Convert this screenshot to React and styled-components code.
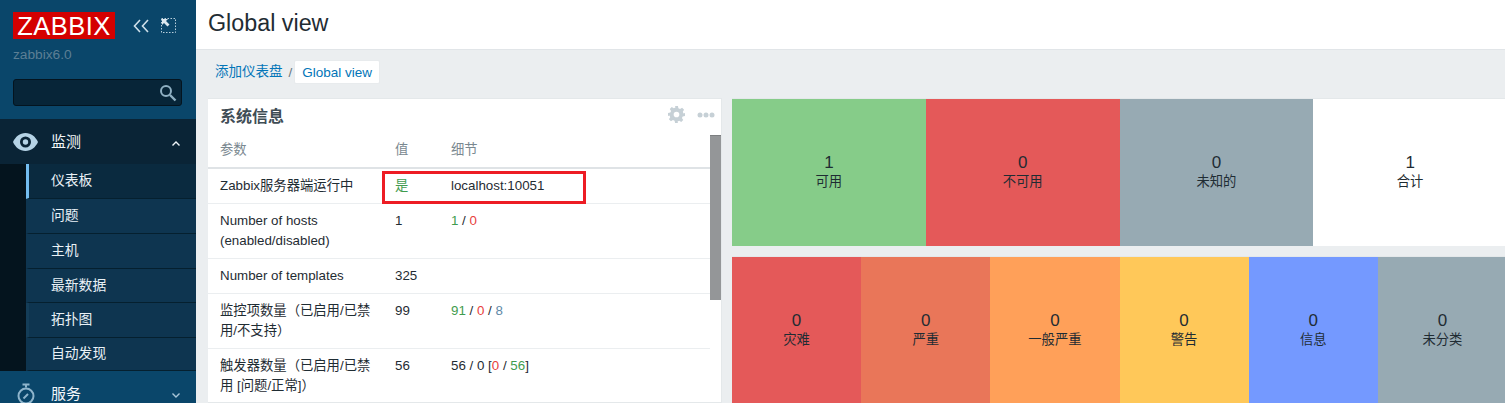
import React from "react";
import styled, { createGlobalStyle } from "styled-components";

const Global = createGlobalStyle`
  html, body { margin: 0; padding: 0; height: 100%; overflow: hidden; }
  body { background: #ebeef0; font-family: "Liberation Sans", "Noto Sans CJK SC", sans-serif; font-size: 13.33px; color: #1f2c33; }
  * { box-sizing: border-box; }
`;
const Page = styled.div`display: flex; width: 1505px; height: 403px; overflow: hidden;`;
const Sidebar = styled.aside`width: 196px; flex: none; background: #0a466a; display: flex; flex-direction: column; overflow: hidden;`;
const Brand = styled.div`height: 119px; flex: none; padding: 12px 13px 0;`;
const LogoRow = styled.div`display: flex; align-items: center;`;
const Logo = styled.div`
  width: 102px; height: 27px; background: #d40000; color: #fff; font-size: 25.5px; letter-spacing: 0.5px;
  line-height: 28px; text-align: center; white-space: nowrap;
`;
const BrandIcons = styled.div`display: flex; align-items: center; gap: 12px; margin-left: 18px;`;
const ServerName = styled.div`color: #5c7f95; font-size: 13.7px; line-height: 16px; margin-top: 8px;`;
const Search = styled.div`
  margin-top: 16px; width: 169px; height: 27px; background: #072538; border: 1px solid #04141f; border-radius: 3px;
  display: flex; align-items: center; justify-content: flex-end; padding-right: 4px;
`;
const Section = styled.div`flex: none; background: #0a2a3f;`;
const MenuHead = styled.div`
  height: 45px; flex: none; display: flex; align-items: center; color: #f2f7fa; font-size: 15px; padding-left: 13px;
  background: ${p => p.$open ? "#0a2436" : "transparent"};
`;
const MenuIcon = styled.span`width: 25px; display: flex; justify-content: center; margin-right: 13px;`;
const MenuLabel = styled.span`flex: 1; padding-bottom: 2px;`;
const Caret = styled.span`width: 16px; margin: 3px 12px 0 0; display: flex; justify-content: center;`;
const SubWrap = styled.div`display: flex;`;
const Gutter = styled.div`width: 26px; background: #04141e; flex: none;`;
const SubList = styled.div`flex: 1; min-width: 0;`;
const SubItem = styled.div`
  height: ${p => p.$h}px; display: flex; align-items: center; color: #e9f1f6; font-size: 13.8px;
  background: ${p => p.$active ? "#0a2a3f" : "#0e3550"};
  border-bottom: 1px solid #05202f;
  border-left: 3px solid ${p => p.$active ? "#73bdf0" : p.$hover ? "#143d58" : "transparent"};
  padding: 0 0 4px 22px;
`;
const Main = styled.main`flex: 1; min-width: 0;`;
const Header = styled.header`
  height: 50px; background: #fff; border-bottom: 1px solid #e1e5e8; display: flex; align-items: center;
  padding: 0 0 3px 12px; font-size: 23.3px; color: #1f2c33;
`;
const Crumbs = styled.nav`height: 48px; padding: 10px 0 0 19px; display: flex; align-items: flex-start; font-size: 13.5px; color: #0275b8;`;
const CrumbLink = styled.span`line-height: 24px;`;
const CrumbSep = styled.span`color: #687780; margin: 0 2px 0 6px; line-height: 26px;`;
const CrumbTag = styled.span`background: #fff; height: 24px; line-height: 23px; padding: 0 7px; border-radius: 2px; border: 1px solid #e8ebed;`;
const Board = styled.div`display: flex; gap: 10px; padding-left: 12px; align-items: flex-start;`;
const Widget = styled.section`
  width: 514px; flex: none; height: 305px; background: #fff; border: 1px solid #e4e8ea; border-left: none; position: relative;
`;
const WidgetHead = styled.div`height: 35px; display: flex; align-items: center; padding: 0 6px 3px 12px;`;
const WidgetTitle = styled.h2`margin: 0; flex: 1; font-size: 16px; font-weight: 700; color: #3f4d55;`;
const WidgetTools = styled.div`display: flex; align-items: center; gap: 12px; margin: 0 0 1px;`;
const WidgetBody = styled.div`display: flex;`;
const Table = styled.div`flex: 1; min-width: 0;`;
const Row = styled.div`
  display: grid; grid-template-columns: 175px 56px 1fr; padding-left: 12px; height: ${p => p.$h}px; align-items: start;
  border-bottom: ${p => p.$head ? "2px solid #dfe3e6" : "1px solid #ebeef0"};
  color: ${p => p.$head ? "#7a8890" : "#1f2c33"}; padding-top: ${p => p.$head ? 6 : 7}px; line-height: 20px;
`;
const Cell = styled.div`padding-right: ${p => p.$wrap ? 14 : 4}px;`;
const Tone = styled.span`color: ${p => p.$c};`;
const ScrollRail = styled.div`width: 11px; flex: none; padding-top: 1px;`;
const ScrollThumb = styled.div`height: 165px; background: #949698; border-top: 1px solid #7c7e80;`;
const Callout = styled.div`
  position: absolute; left: 174px; top: 72px; width: 204px; height: 33px; border: 3px solid #ed1c24; pointer-events: none;
`;
const Tiles = styled.div`flex: none; width: 775px; display: flex; flex-direction: column; gap: 10px;`;
const TileRow = styled.div`
  display: grid; grid-template-columns: repeat(${p => p.$n}, 1fr); height: ${p => p.$h}px;
  border-top: 1px solid #e4e8ea; background: #fff;
`;
const Tile = styled.div`
  background: ${p => p.$c}; display: flex; flex-direction: column; align-items: center; justify-content: center;
  color: #1f2c33; padding-bottom: 1px;
`;
const TileNum = styled.div`font-size: 17px; line-height: 19px;`;
const TileLabel = styled.div`font-size: 13.33px; line-height: 19px;`;

const Collapse = () => (
  <svg width="16" height="14" viewBox="0 0 16 14" fill="none" stroke="#cfe0ea" strokeWidth="1.6">
    <path d="M7 1 1.500 7 7 13M15 1 9.500 7l5.500 6" />
  </svg>
);
const Kiosk = () => (
  <svg width="15" height="15" viewBox="0 0 15 15" fill="none">
    <rect x="0.5" y="0.5" width="14" height="14" stroke="#b9cfdc" strokeDasharray="1.5 1.5" />
    <path d="M1 1h6L5 3l3.500 3.500-2 2L3 5 1 7z" fill="#dbe8ef" />
  </svg>
);
const SearchIcon = () => (
  <svg width="18" height="18" viewBox="0 0 18 18" fill="none" stroke="#8fb0c3">
    <circle cx="7" cy="7" r="5" strokeWidth="2" />
    <path d="M11 11l5.500 5.500" strokeWidth="2.400" />
  </svg>
);
const Eye = () => (
  <svg width="25" height="18" viewBox="0 0 25 18">
    <path fillRule="evenodd" fill="#b5d3e6" d="M12.500 0C6.800 0 2.400 3.800 0 9c2.400 5.200 6.800 9 12.500 9S22.600 14.200 25 9C22.600 3.800 18.200 0 12.500 0zm0 3.500a5.500 5.500 0 1 1 0 11 5.500 5.500 0 0 1 0-11zm0 2.800a2.700 2.700 0 1 0 0 5.400 2.700 2.700 0 0 0 0-5.400z" />
  </svg>
);
const Timer = () => (
  <svg width="18" height="22" viewBox="0 0 18 22" fill="none" stroke="#8fb5cc" strokeWidth="2">
    <path d="M5.500 1.500h7M9 1.500v3" />
    <circle cx="9" cy="13" r="7.500" />
    <path d="M6.500 15.500 11 11" />
  </svg>
);
const Chevron = ({ up }) => (
  <svg width="8" height="5" viewBox="0 0 8 5" fill="none" stroke={up ? "#f0f6fa" : "#a9c6d8"} strokeWidth="1.4">
    <path d={up ? "M.5 4.500 4 1l3.500 3.500" : "M.5.500 4 4 7.500.5"} />
  </svg>
);
const Gear = () => (
  <svg width="17" height="17" viewBox="0 0 24 24" fill="#c6d0d6">
    <path fillRule="evenodd" d="M10 0h4l.7 3.300 2.300 1 2.900-1.800 2.800 2.800-1.800 2.900 1 2.300L24 10v4l-3.300.7-1 2.300 1.800 2.900-2.800 2.800-2.900-1.800-2.300 1L14 24h-4l-.7-3.300-2.300-1-2.900 1.800-2.800-2.800 1.800-2.900-1-2.300L0 14v-4l3.300-.7 1-2.300-1.800-2.900 2.800-2.800 2.900 1.800 2.300-1zM12 8a4 4 0 1 0 0 8 4 4 0 0 0 0-8z" />
  </svg>
);
const Dots = () => (
  <svg width="18" height="6" viewBox="0 0 18 6" fill="#c6d0d6">
    <circle cx="3" cy="3" r="2.500" /><circle cx="9" cy="3" r="2.500" /><circle cx="15" cy="3" r="2.500" />
  </svg>
);

const G = "#3f9c4f", R = "#e8413d", B = "#5f8aa8";
const subs = [
  ["仪表板", 35, true], ["问题", 35], ["主机", 35], ["最新数据", 34], ["拓扑图", 35, false, true], ["自动发现", 33],
];
const hostTiles = [["#86cc89", "1", "可用"], ["#e45959", "0", "不可用"], ["#97aab3", "0", "未知的"], ["#ffffff", "1", "合计"]];
const sevTiles = [["#e45959", "灾难"], ["#e97659", "严重"], ["#ffa059", "一般严重"], ["#ffc859", "警告"], ["#7499ff", "信息"], ["#97aab3", "未分类"]];

export default function App() {
  return (
    <Page>
      <Global />
      <Sidebar>
        <Brand>
          <LogoRow>
            <Logo>ZABBIX</Logo>
            <BrandIcons><Collapse /><Kiosk /></BrandIcons>
          </LogoRow>
          <ServerName>zabbix6.0</ServerName>
          <Search><SearchIcon /></Search>
        </Brand>
        <Section>
          <MenuHead $open>
            <MenuIcon><Eye /></MenuIcon><MenuLabel>监测</MenuLabel><Caret><Chevron up /></Caret>
          </MenuHead>
          <SubWrap>
            <Gutter />
            <SubList>
              {subs.map(([t, h, a, hv]) => <SubItem key={t} $h={h} $active={a} $hover={hv}>{t}</SubItem>)}
            </SubList>
          </SubWrap>
        </Section>
        <MenuHead>
          <MenuIcon><Timer /></MenuIcon><MenuLabel>服务</MenuLabel><Caret><Chevron /></Caret>
        </MenuHead>
      </Sidebar>
      <Main>
        <Header>Global view</Header>
        <Crumbs>
          <CrumbLink>添加仪表盘</CrumbLink><CrumbSep>/</CrumbSep><CrumbTag>Global view</CrumbTag>
        </Crumbs>
        <Board>
          <Widget>
            <WidgetHead>
              <WidgetTitle>系统信息</WidgetTitle>
              <WidgetTools><Gear /><Dots /></WidgetTools>
            </WidgetHead>
            <WidgetBody>
              <Table>
                <Row $head $h={35}><Cell>参数</Cell><Cell>值</Cell><Cell>细节</Cell></Row>
                <Row $h={35}><Cell>Zabbix服务器端运行中</Cell><Cell><Tone $c={G}>是</Tone></Cell><Cell>localhost:10051</Cell></Row>
                <Row $h={55}><Cell $wrap>Number of hosts (enabled/disabled)</Cell><Cell>1</Cell><Cell><Tone $c={G}>1</Tone> / <Tone $c={R}>0</Tone></Cell></Row>
                <Row $h={35}><Cell>Number of templates</Cell><Cell>325</Cell><Cell /></Row>
                <Row $h={55}><Cell $wrap>监控项数量（已启用/已禁用/不支持）</Cell><Cell>99</Cell><Cell><Tone $c={G}>91</Tone> / <Tone $c={R}>0</Tone> / <Tone $c={B}>8</Tone></Cell></Row>
                <Row $h={55}><Cell $wrap>触发器数量（已启用/已禁用 [问题/正常]）</Cell><Cell>56</Cell><Cell>56 / 0 [<Tone $c={R}>0</Tone> / <Tone $c={G}>56</Tone>]</Cell></Row>
              </Table>
              <ScrollRail><ScrollThumb /></ScrollRail>
            </WidgetBody>
            <Callout />
          </Widget>
          <Tiles>
            <TileRow $n={4} $h={148}>
              {hostTiles.map(([c, n, l]) => <Tile key={l} $c={c}><TileNum>{n}</TileNum><TileLabel>{l}</TileLabel></Tile>)}
            </TileRow>
            <TileRow $n={6} $h={147}>
              {sevTiles.map(([c, l]) => <Tile key={l} $c={c}><TileNum>0</TileNum><TileLabel>{l}</TileLabel></Tile>)}
            </TileRow>
          </Tiles>
        </Board>
      </Main>
    </Page>
  );
}
